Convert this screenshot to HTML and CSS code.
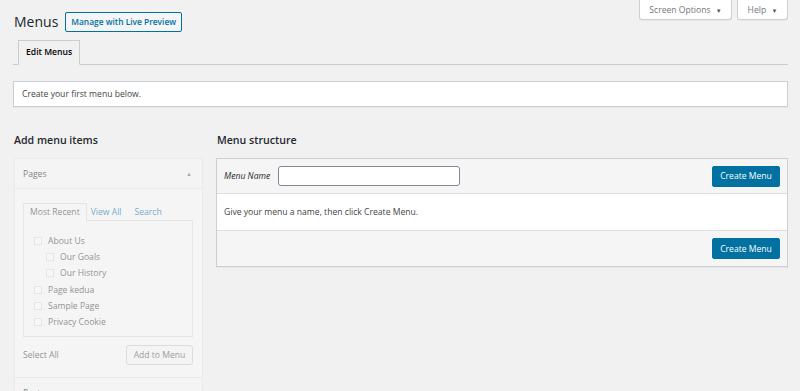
FILE: index.html
```html
<!DOCTYPE html>
<html lang="en">
<head>
    <meta charset="UTF-8">
    <title>Menus</title>
    <link rel="stylesheet" href="styles.css">
</head>
<body>
    <!-- Screen meta tabs -->
    <div class="screen-meta">
        <button class="meta-tab options">Screen Options <span class="caret">&#9660;</span></button>
        <button class="meta-tab help">Help <span class="caret">&#9660;</span></button>
    </div>

    <div class="wrap">
        <div class="title-row">
            <h1>Menus</h1>
            <a class="page-title-action" href="#">Manage with Live Preview</a>
        </div>

        <div class="nav-tabs">
            <a class="nav-tab active" href="#">Edit Menus</a>
        </div>

        <div class="notice">Create your first menu below.</div>

        <div class="columns">
            <!-- Add menu items -->
            <div class="side-col">
                <h2>Add menu items</h2>
                <div class="accordion">
                    <div class="acc-head">Pages <span class="acc-arrow">&#9650;</span></div>
                    <div class="acc-body">
                        <div class="tabs">
                            <span class="tab active">Most Recent</span>
                            <span class="tab">View All</span>
                            <span class="tab">Search</span>
                        </div>
                        <div class="tab-panel">
                            <label class="item"><span class="check"></span>About Us</label>
                            <label class="item child"><span class="check"></span>Our Goals</label>
                            <label class="item child"><span class="check"></span>Our History</label>
                            <label class="item"><span class="check"></span>Page kedua</label>
                            <label class="item"><span class="check"></span>Sample Page</label>
                            <label class="item"><span class="check"></span>Privacy Cookie</label>
                        </div>
                        <div class="acc-actions">
                            <span>Select All</span>
                            <button class="btn-secondary">Add to Menu</button>
                        </div>
                    </div>
                    <div class="acc-head next">Posts <span class="acc-arrow">&#9660;</span></div>
                </div>
            </div>

            <!-- Menu structure -->
            <div class="main-col">
                <h2>Menu structure</h2>
                <div class="menu-box">
                    <div class="menu-header">
                        <label class="name-label">Menu Name</label>
                        <input class="name-input" type="text">
                        <button class="btn-primary">Create Menu</button>
                    </div>
                    <div class="menu-body">Give your menu a name, then click Create Menu.</div>
                    <div class="menu-footer">
                        <button class="btn-primary">Create Menu</button>
                    </div>
                </div>
            </div>
        </div>
    </div>
</body>
</html>
```

FILE: styles.css
```css
body {
    margin: 0;
    background-color: #f1f1f1;
    color: #444;
    font-family: 'Open Sans', sans-serif;
    font-size: 8.6px;
    height: 391px;
    overflow: hidden;
    position: relative;
}

/* Screen options / help tabs */
.screen-meta {
    position: absolute;
    top: 0;
    right: 12px;
    display: flex;
    gap: 5px;
}

.meta-tab {
    background: #fff;
    border: 1px solid #ccd0d4;
    border-top: none;
    border-radius: 0 0 3px 3px;
    color: #72777c;
    font-family: inherit;
    font-size: 8.6px;
    height: 20px;
    padding: 0;
    white-space: nowrap;
    box-shadow: 0 1px 1px rgba(0, 0, 0, 0.04);
}

.meta-tab .caret {
    font-size: 6px;
    margin-left: 3px;
    color: #555;
}

.meta-tab.options {
    width: 93px;
}

.meta-tab.help {
    width: 51px;
}

.wrap {
    padding: 0 12px 0 13px;
}

.title-row {
    display: flex;
    align-items: center;
    padding-top: 10px;
    height: 23px;
}

h1 {
    font-size: 14px;
    font-weight: 400;
    color: #23282d;
    margin: 0 0 0 1px;
}

.page-title-action {
    margin-left: 7px;
    border: 1px solid #0071a1;
    border-radius: 2px;
    background: #f3f5f6;
    color: #0071a1;
    text-decoration: none;
    font-size: 8.4px;
    font-weight: 600;
    height: 18px;
    line-height: 18px;
    padding: 0 5px;
}

.nav-tabs {
    margin-top: 7px;
    border-bottom: 1px solid #ccc;
    padding-left: 5px;
    height: 24px;
}

.nav-tab {
    display: inline-block;
    background: #f1f1f1;
    border: 1px solid #ccc;
    border-bottom: 1px solid #f1f1f1;
    color: #000;
    text-decoration: none;
    font-size: 8.6px;
    font-weight: 600;
    line-height: 23px;
    padding: 0 7px;
    box-sizing: border-box;
    height: 25px;
}

.notice {
    margin-top: 16px;
    background: #fff;
    border: 1px solid #ccd0d4;
    height: 24px;
    line-height: 24px;
    padding: 0 8px;
    color: #444;
    box-shadow: 0 1px 1px rgba(0, 0, 0, 0.04);
}

.columns {
    display: flex;
    gap: 13px;
    margin-top: 26px;
}

h2 {
    font-size: 10.6px;
    font-weight: 600;
    color: #23282d;
    margin: 0 0 7px 1px;
    height: 18px;
}

/* Left column, faded as when no menu exists */
.side-col {
    width: 190px;
    flex-shrink: 0;
}

.accordion {
    margin-left: 1px;
    border: 1px solid #e5e5e5;
    background: #fafafa;
    opacity: 0.55;
}

.acc-head {
    display: flex;
    justify-content: space-between;
    align-items: center;
    height: 29px;
    padding: 0 10px 0 8px;
    color: #23282d;
    background: #f8f8f8;
    border-bottom: 1px solid #e5e5e5;
}

.acc-head.next {
    border-top: 1px solid #e5e5e5;
    border-bottom: none;
}

.acc-arrow {
    font-size: 6px;
    color: #72777c;
}

.acc-body {
    padding: 14px 9px 12px 8px;
}

.tabs {
    display: flex;
    height: 18px;
    align-items: stretch;
}

.tab {
    padding: 0 6px 0 4px;
    line-height: 18px;
    color: #0073aa;
}

.tab.active {
    color: #444;
    background: #fafafa;
    border: 1px solid #ddd;
    border-bottom: none;
    line-height: 17px;
    padding: 0 6px;
}

.tab.active + .tab {
    padding-left: 4px;
}

.tab + .tab + .tab {
    padding-left: 7px;
}

.tab-panel {
    border: 1px solid #ddd;
    margin-top: -1px;
    height: 97px;
    padding: 12px 10px 6px;
}

.item {
    display: flex;
    align-items: center;
    height: 16.2px;
    color: #444;
}

.item.child {
    padding-left: 12px;
}

.check {
    width: 6px;
    height: 6px;
    border: 1px solid #ddd;
    background: #fff;
    margin-right: 6px;
    display: inline-block;
}

.acc-actions {
    display: flex;
    justify-content: space-between;
    align-items: center;
    margin-top: 8px;
}

.btn-secondary {
    font-family: inherit;
    font-size: 8.6px;
    color: #555;
    background: #f7f7f7;
    border: 1px solid #ccc;
    border-radius: 3px;
    height: 20px;
    width: 67px;
    padding: 0;
}

/* Menu structure */
.main-col {
    flex: 1;
}

.menu-box {
    border: 1px solid #ccd0d4;
    background: #fff;
    box-shadow: 0 1px 1px rgba(0, 0, 0, 0.04);
}

.menu-header {
    display: flex;
    align-items: center;
    background: #f5f5f5;
    height: 34px;
    padding: 0 7px 0 7px;
    border-bottom: 1px solid #dfdfdf;
}

.name-label {
    font-style: italic;
    color: #23282d;
    margin-right: 8px;
}

.name-input {
    width: 180px;
    height: 18px;
    border: 1px solid #7e8993;
    border-radius: 3px;
    padding: 0;
}

.btn-primary {
    margin-left: auto;
    background: #0071a1;
    border: 1px solid #0071a1;
    border-radius: 2px;
    color: #fff;
    font-family: inherit;
    font-size: 8.6px;
    height: 21px;
    width: 68px;
    padding: 0;
}

.menu-body {
    height: 36px;
    line-height: 36px;
    padding: 0 7px;
    color: #444;
}

.menu-footer {
    display: flex;
    align-items: center;
    background: #f5f5f5;
    border-top: 1px solid #dfdfdf;
    height: 35px;
    padding: 0 7px;
}
```
